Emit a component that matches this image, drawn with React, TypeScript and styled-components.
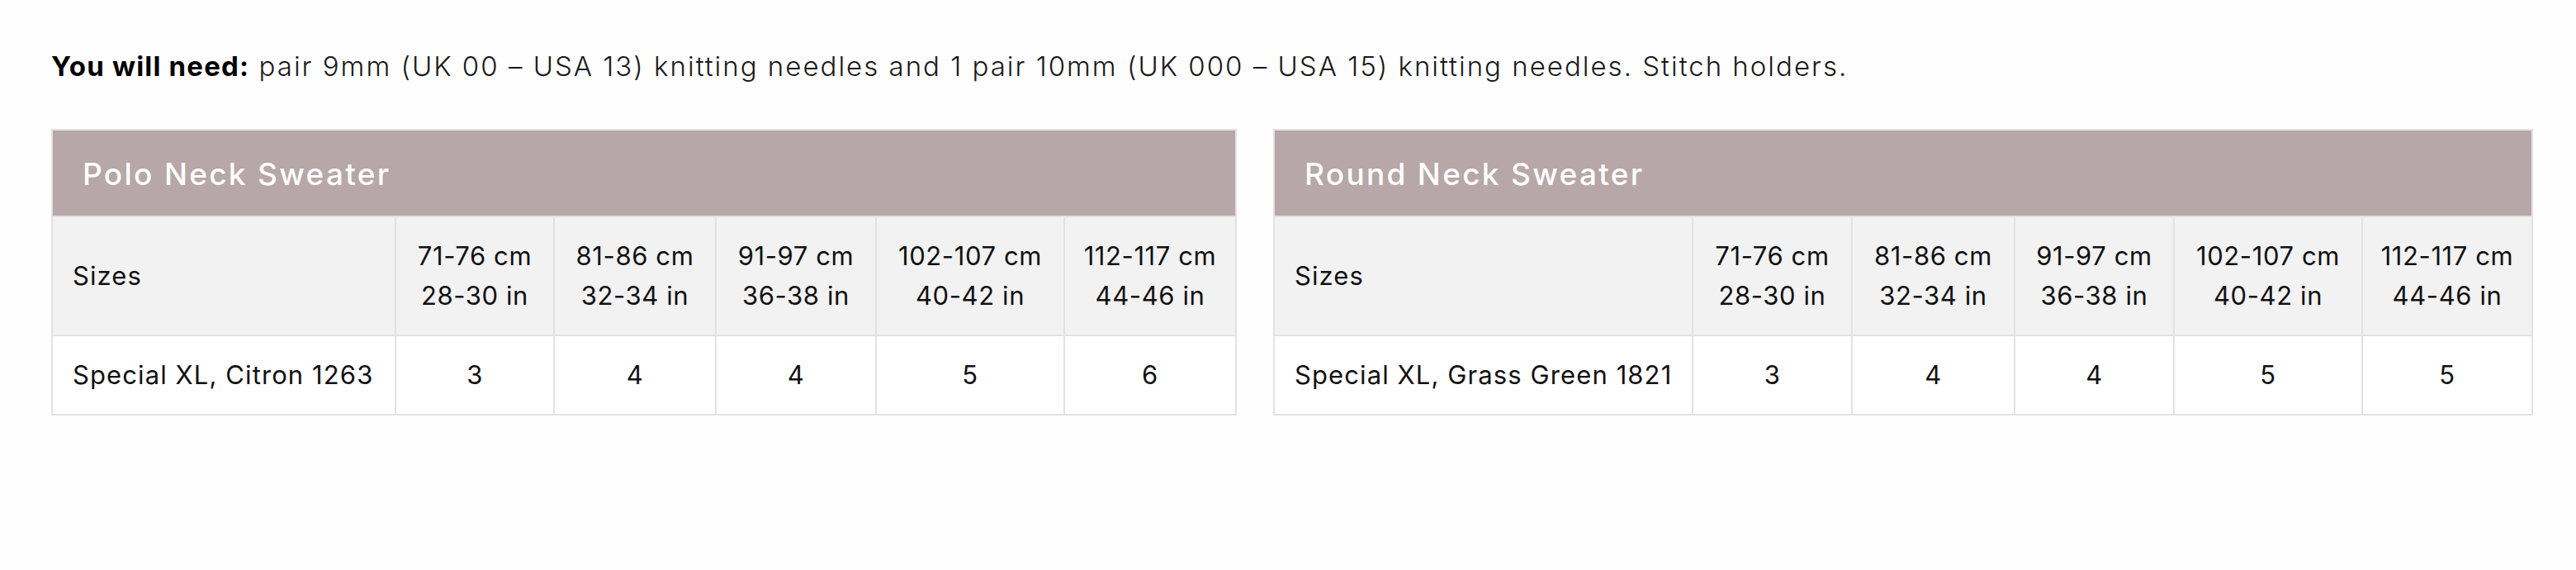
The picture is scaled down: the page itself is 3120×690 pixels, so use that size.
import React from "react";
import styled, { createGlobalStyle } from "styled-components";

// Types
type SweaterTable = {
  title: string;
  yarn: string;
  balls: number[];
  widths: number[];
};

// Data
const sizes = [
  { cm: "71-76 cm", inch: "28-30 in" },
  { cm: "81-86 cm", inch: "32-34 in" },
  { cm: "91-97 cm", inch: "36-38 in" },
  { cm: "102-107 cm", inch: "40-42 in" },
  { cm: "112-117 cm", inch: "44-46 in" },
];

const tables: SweaterTable[] = [
  {
    title: "Polo Neck Sweater",
    yarn: "Special XL, Citron 1263",
    balls: [3, 4, 4, 5, 6],
    widths: [416, 192, 196, 194, 228, 208],
  },
  {
    title: "Round Neck Sweater",
    yarn: "Special XL, Grass Green 1821",
    balls: [3, 4, 4, 5, 5],
    widths: [507, 193, 197, 193, 228, 206],
  },
];

const GlobalStyle = createGlobalStyle`
  body {
    margin: 0;
    background: #fefefe;
    font-family: Inter, "Open Sans", sans-serif;
    color: #111;
  }
`;

const Page = styled.main`
  padding: 50px 52px 0 62px;
`;

const Needs = styled.p`
  margin: 0 0 46px;
  font-size: 33px;
  line-height: 60px;
  font-weight: 300;
  letter-spacing: 2px;
  color: #1a1a1a;

  strong {
    font-weight: 700;
    letter-spacing: 1.2px;
    color: #000;
  }
`;

const Tables = styled.div`
  display: flex;
  gap: 44px;
  align-items: flex-start;
`;

const Table = styled.table<{ $width: number }>`
  width: ${({ $width }) => $width}px;
  border-collapse: collapse;
  table-layout: fixed;
  border: 2px solid #e2e2e2;
  flex: none;
`;

const TitleCell = styled.th`
  background: #b7a7a9;
  color: #fff;
  text-align: left;
  font-weight: 500;
  font-size: 37px;
  line-height: 57px;
  letter-spacing: 2.3px;
  padding: 24px 36px 22px;
  border: 2px solid #e2e2e2;
`;

const Row = styled.tr<{ $shaded?: boolean }>`
  background: ${({ $shaded }) => ($shaded ? "#f2f2f2" : "#ffffff")};
`;

const Cell = styled.td<{ $left?: boolean }>`
  border: 2px solid #e2e2e2;
  padding: 23px 0 23px ${({ $left }) => ($left ? "24px" : "0")};
  font-size: 31px;
  line-height: 48px;
  font-weight: 400;
  letter-spacing: ${({ $left }) => ($left ? "1.1px" : "0.6px")};
  color: #111;
  text-align: ${({ $left }) => ($left ? "left" : "center")};
  white-space: nowrap;
`;

const SweaterSizes: React.FC<{ data: SweaterTable }> = ({ data }) => (
  <Table $width={data.widths.reduce((a, b) => a + b, 0)}>
    <colgroup>
      {data.widths.map((w, i) => (
        <col key={i} style={{ width: w }} />
      ))}
    </colgroup>
    <thead>
      <tr>
        <TitleCell colSpan={6}>{data.title}</TitleCell>
      </tr>
    </thead>
    <tbody>
      <Row $shaded>
        <Cell $left>Sizes</Cell>
        {sizes.map((s) => (
          <Cell key={s.cm}>
            {s.cm}
            <br />
            {s.inch}
          </Cell>
        ))}
      </Row>
      <Row>
        <Cell $left>{data.yarn}</Cell>
        {data.balls.map((b, i) => (
          <Cell key={i}>{b}</Cell>
        ))}
      </Row>
    </tbody>
  </Table>
);

const App: React.FC = () => (
  <>
    <GlobalStyle />
    <Page>
      <Needs>
        <strong>You will need:</strong> pair 9mm (UK 00 – USA 13) knitting
        needles and 1 pair 10mm (UK 000 – USA 15) knitting needles. Stitch
        holders.
      </Needs>
      <Tables>
        {tables.map((t) => (
          <SweaterSizes key={t.title} data={t} />
        ))}
      </Tables>
    </Page>
  </>
);

export default App;
